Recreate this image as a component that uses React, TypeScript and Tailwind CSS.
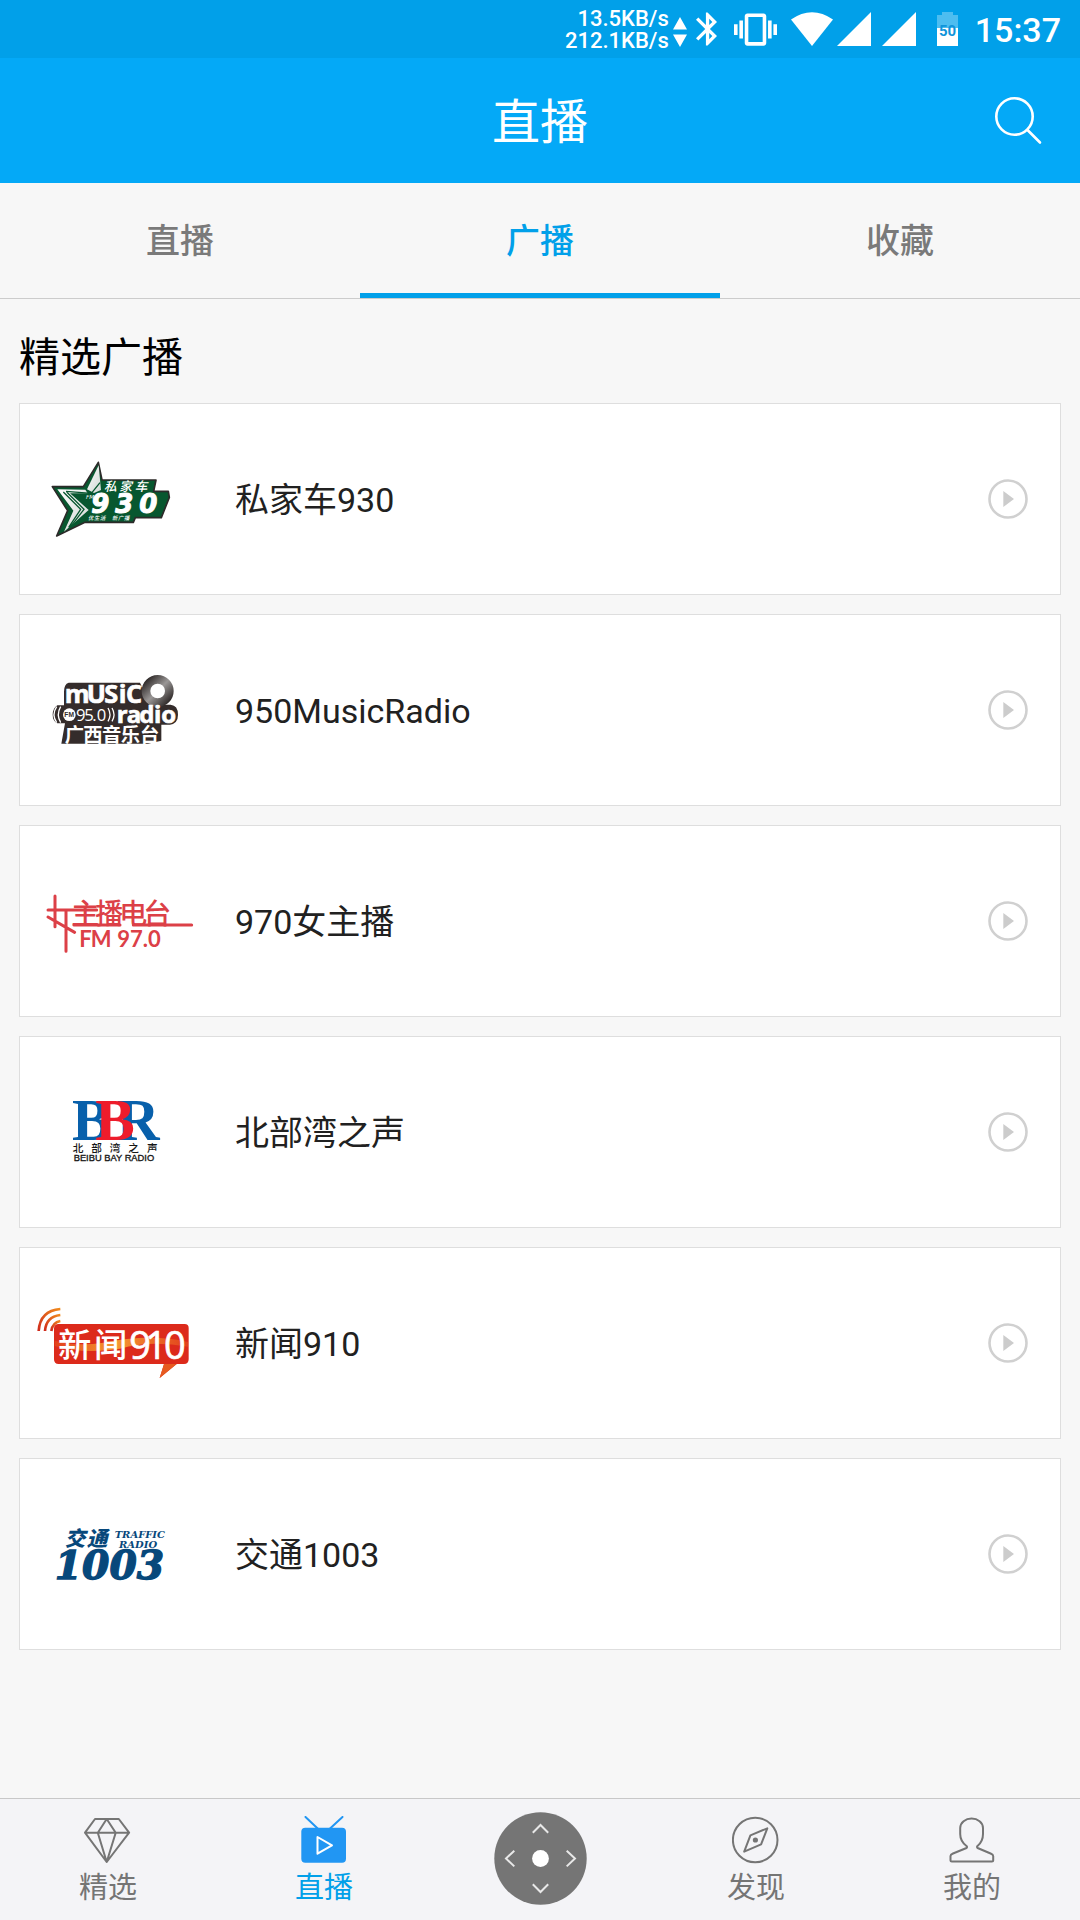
import React from "react";

const CJK = "font-['Roboto','Noto_Sans_CJK_SC',sans-serif]";
const LOGO = "h-[110px] w-[170px] shrink-0";

function Logo930() {
  return (
    <svg className={LOGO} viewBox="30 42 510 330" role="img" aria-label="FM930">
      <defs>
        <linearGradient id="star" x1="0" y1="0" x2="1" y2="1">
          <stop offset="0" stopColor="#ffffff" />
          <stop offset="1" stopColor="#cfd6d2" />
        </linearGradient>
      </defs>
      <path d="M235 97 L246 150 L408 150 L401 184 L445 184 L448 202 L424 263 L346 263 L340 277 L195 277 L110 318 L143 242 L97 170 L190 170 Z" fill="#07572f" stroke="#2c2a29" strokeWidth="5" strokeLinejoin="round" />
      <path d="M236 106 L243 180 L222 189 L201 178 Z" fill="url(#star)" />
      <path d="M112 178 L196 179 L203 190 L150 190 L206 240 L132 305 L160 242 Z" fill="url(#star)" />
      <path d="M130 186 L182 238 L146 292 M140 186 L192 238 L150 292 M240 158 L214 190 L138 184" fill="none" stroke="#07572f" strokeWidth="4" />
      <g fill="#ffffff" fontStyle="italic" fontWeight="700">
        <text className={CJK} x="252 298 344" y="182" fontSize="38" fontWeight="500">私家车</text>
        <text className="font-['DejaVu_Sans']" x="198" y="206" fontSize="17" fontWeight="400">FM</text>
        <text className="font-['DejaVu_Sans']" x="214 286 358" y="249" fontSize="78" stroke="#ffffff" strokeWidth="3">930</text>
        <text className={CJK} x="204 222 240 276 294 312" y="271" fontSize="16" fontWeight="500">优生活新广播</text>
      </g>
    </svg>
  );
}

function Logo950() {
  return (
    <svg className={LOGO} viewBox="30 15 510 330" role="img" aria-label="Music Radio FM95.0">
      <defs>
        <linearGradient id="disc" x1="0" y1="0" x2="1" y2="1">
          <stop offset="0" stopColor="#2b2625" />
          <stop offset="0.5" stopColor="#9a9796" />
          <stop offset="1" stopColor="#2b2625" />
        </linearGradient>
      </defs>
      <path d="M146 98 Q132 102 132 125 V166 H112 Q98 176 98 194 Q98 212 112 220 H135 L124 281 H384 L424 272 V224 H450 Q474 220 474 194 Q474 166 452 164 H390 L360 98 Z" fill="#342c2b" />
      <circle cx="413" cy="123" r="35" fill="#ffffff" stroke="url(#disc)" strokeWidth="26" />
      <g fill="#ffffff" stroke="#ffffff" strokeWidth="2" fontWeight="700">
        <text className="font-['Open_Sans']" x="134" y="158" fontSize="76">m</text>
        <text className="font-['Open_Sans']" x="200 253 296 318" y="158" fontSize="76">USiC</text>
        <text className="font-['Open_Sans']" x="290 320 358 402 424" y="220" fontSize="72">radio</text>
        <text className={CJK} x="134 190 246 302 360" y="275" fontSize="58" stroke="none">广西音乐台</text>
      </g>
      <circle cx="148" cy="194" r="19" fill="#ffffff" />
      <text className="font-['Liberation_Sans']" x="133" y="202" fontSize="20" fontWeight="700" fill="#342c2b">FM</text>
      <text className="font-['Open_Sans']" x="168 193 217 230" y="213" fontSize="50" fill="#ffffff">95.0</text>
      <path d="M122 170 Q108 194 122 218 M110 170 Q94 194 110 218 M264 174 Q276 194 264 214 M276 174 Q288 194 276 214" fill="none" stroke="#ffffff" strokeWidth="4" />
    </svg>
  );
}

function Logo970() {
  return (
    <svg className={LOGO} viewBox="30 -12 510 330" role="img" aria-label="女主播电台 FM 97.0">
      <g fill="none" stroke="#dc4047" strokeWidth="9" strokeLinecap="round">
        <path d="M105 78 V170 M84 120 H230 M84 141 L164 187 M138 122 V244 M162 165 H300 M340 165 H515" />
      </g>
      <g fill="#dc4047">
        <text className={CJK} x="154 226 298 370" y="161" fontSize="84" fontWeight="500">主播电台</text>
        <text className="font-['Lato']" x="178 212 282 292 330 368 384" y="230" fontSize="66" fontWeight="700">FM 97.0</text>
      </g>
    </svg>
  );
}

function LogoBBR() {
  return (
    <svg className={LOGO} viewBox="30 -9 510 330" role="img" aria-label="北部湾之声 Beibu Bay Radio">
      <g className="font-['Liberation_Serif']" fontWeight="700" fontSize="178">
        <text x="156" y="179" fill="#0860ab">B</text>
        <text x="290" y="179" fill="#0860ab">R</text>
        <text x="226" y="179" fill="#ee1c2b">B</text>
      </g>
      <g fill="#161616">
        <text className={CJK} x="158 214 269 325 381" y="216" fontSize="32" fontWeight="500">北部湾之声</text>
        <text className="font-['Liberation_Sans']" x="161" y="243" fontSize="28" stroke="#161616" strokeWidth="1">BEIBU BAY RADIO</text>
      </g>
    </svg>
  );
}

function Logo910() {
  return (
    <svg className={LOGO} viewBox="30 -6 510 330" role="img" aria-label="新闻910">
      <defs>
        <linearGradient id="wave" x1="0" y1="0" x2="1" y2="0">
          <stop offset="0" stopColor="#e2401c" />
          <stop offset="0.45" stopColor="#f59a32" />
          <stop offset="1" stopColor="#e2401c" />
        </linearGradient>
        <linearGradient id="arc" x1="0" y1="1" x2="1" y2="0">
          <stop offset="0" stopColor="#cf2a1c" />
          <stop offset="1" stopColor="#f08a1c" />
        </linearGradient>
      </defs>
      <g fill="none" stroke="url(#arc)" strokeWidth="8">
        <path d="M56 123 Q60 62 121 57" />
        <path d="M75 123 Q78 80 121 75" />
        <path d="M94 123 Q98 97 121 93" />
      </g>
      <path d="M116 102 H494 Q506 102 506 114 V208 Q506 222 492 222 H470 L419 264 L432 222 H116 Q102 222 102 208 V116 Q102 102 116 102 Z" fill="#dc2a1b" />
      <path d="M104 152 Q170 170 250 158 Q390 130 504 156 V170 Q390 150 300 176 Q190 194 104 168 Z" fill="url(#wave)" />
      <path d="M470 222 L419 264 L432 222 Z" fill="#e65a20" />
      <g fill="#ffffff">
        <text className={CJK} x="114 222" y="200" fontSize="100" fontWeight="500">新闻</text>
        <text className="font-['Open_Sans']" x="328 376 432" y="206" fontSize="114" stroke="#ffffff" strokeWidth="2">910</text>
      </g>
    </svg>
  );
}

function Logo1003() {
  return (
    <svg className={LOGO} viewBox="30 -3 510 330" role="img" aria-label="交通 1003 Traffic Radio">
      <g fill="#07487b" fontWeight="700" fontStyle="italic">
        <text className={CJK} x="134 200" y="138" fontSize="62" fontWeight="900">交通</text>
        <text className="font-['DejaVu_Serif']" x="284" y="114" fontSize="30">TRAFFIC</text>
        <text className="font-['DejaVu_Serif']" x="297" y="143" fontSize="30">RADIO</text>
        <text className="font-['DejaVu_Serif']" x="104" y="237" fontSize="118" stroke="#07487b" strokeWidth="4">1003</text>
      </g>
    </svg>
  );
}

const stations = [
  { name: "私家车930", Logo: Logo930 },
  { name: "950MusicRadio", Logo: Logo950 },
  { name: "970女主播", Logo: Logo970 },
  { name: "北部湾之声", Logo: LogoBBR },
  { name: "新闻910", Logo: Logo910 },
  { name: "交通1003", Logo: Logo1003 },
];

const tabs = ["直播", "广播", "收藏"];

function StatusBar() {
  return (
    <div className="flex h-[58px] items-center justify-end bg-[#01a0e9] pr-[19px] text-white">
      <div className="flex flex-col pt-[2px] text-right text-[22px] leading-[22px] font-medium">
        <span>13.5KB/s</span>
        <span>212.1KB/s</span>
      </div>
      <svg className="mt-[6px] ml-1 h-[30px] w-[14px]" viewBox="0 0 14 30" fill="currentColor" aria-hidden="true">
        <path d="M7 0 L14 12.5 H0 Z M0 17.5 H14 L7 30 Z" />
      </svg>
      <svg className="ml-[9px] h-[34px] w-[21px]" viewBox="5 2 12.71 20" fill="currentColor" aria-hidden="true">
        <path d="M17.71 7.71L12 2h-1v7.59L6.41 5 5 6.41 10.59 12 5 17.59 6.41 19 11 14.41V22h1l5.71-5.71-4.3-4.29 4.3-4.29zM13 5.83l1.88 1.88L13 9.59V5.83zm1.88 10.46L13 18.17v-3.76l1.88 1.88z" />
      </svg>
      <svg className="ml-[17px] h-[33px] w-[43px]" viewBox="0 3 24 18" fill="currentColor" aria-hidden="true">
        <path d="M0 15h2V9H0v6zm3 2h2V7H3v10zm19-8v6h2V9h-2zm-3 8h2V7h-2v10zM16.5 3h-9C6.67 3 6 3.67 6 4.5v15c0 .83.67 1.5 1.5 1.5h9c.83 0 1.5-.67 1.5-1.5v-15c0-.83-.67-1.5-1.5-1.5zM16 19H8V5h8v14z" />
      </svg>
      <svg className="ml-[14px] h-[34px] w-[42px]" viewBox="0 0 42 34" fill="currentColor" aria-hidden="true">
        <path d="M0 7.5 Q21 -7 42 7.5 L21 34 Z" />
      </svg>
      <svg className="ml-1 h-[34px] w-[34px]" viewBox="0 0 34 34" fill="currentColor" aria-hidden="true">
        <path d="M34 0 V34 H0 Z" />
      </svg>
      <svg className="ml-[11px] h-[34px] w-[34px]" viewBox="0 0 34 34" fill="currentColor" aria-hidden="true">
        <path d="M34 0 V34 H0 Z" />
      </svg>
      <svg className="ml-[21px] h-[34px] w-[21px]" viewBox="0 0 21 34" role="img" aria-label="50">
        <path d="M5 0 H16 V3 H21 V16 H0 V3 H5 Z" fill="#4dbdf0" />
        <path d="M0 16 H21 V34 H0 Z" fill="#ffffff" />
        <text x="2" y="24" fontSize="15" fontWeight="700" fill="#0f94da">50</text>
      </svg>
      <span className="ml-[17px] pt-[2px] text-[34px] leading-10 font-medium">15:37</span>
    </div>
  );
}

function NavItem({ label, active, children }: { label: string; active?: boolean; children: React.ReactNode }) {
  return (
    <button
      type="button"
      aria-current={active ? "page" : undefined}
      className={`flex flex-1 flex-col items-center gap-1 pt-[17px] text-[29px] leading-10 ${active ? "text-[#01a0e9]" : "text-[#757575]"}`}
    >
      <svg className="h-12 w-12" viewBox="0 0 48 48" fill="none" stroke="currentColor" strokeWidth="2" strokeLinejoin="round" aria-hidden="true">
        {children}
      </svg>
      {label}
    </button>
  );
}

export default function App() {
  return (
    <div className={`flex min-h-screen flex-col bg-[#f7f7f7] ${CJK}`}>
      <StatusBar />
      <header className="grid h-[125px] grid-cols-[1fr_auto_1fr] items-center bg-[#04a9f7] text-white">
        <h1 className="col-start-2 pt-1 text-[48px] leading-[60px]">直播</h1>
        <button type="button" aria-label="搜索" className="mr-[38px] justify-self-end">
          <svg className="h-12 w-12" viewBox="0 0 48 48" fill="none" stroke="currentColor" strokeWidth="2.6" strokeLinecap="round">
            <circle cx="20.5" cy="19.5" r="18.2" />
            <path d="M33.5 33 L46 45.5" />
          </svg>
        </button>
      </header>

      <div role="tablist" className="grid grid-cols-3 border-b border-[#cccccc]">
        {tabs.map((t, i) => (
          <button
            key={t}
            type="button"
            role="tab"
            aria-selected={i === 1}
            className={`h-[115px] border-y-5 border-t-transparent text-[34px] leading-10 font-medium ${i === 1 ? "border-b-[#01a0e9] text-[#01a0e9]" : "border-b-transparent text-[#7a7a7a]"}`}
          >
            {t}
          </button>
        ))}
      </div>

      <main className="flex-1 px-[19px] pb-[19px]">
        <h2 className="pt-[29px] pb-[15px] text-[41px] leading-[60px] text-black">精选广播</h2>
        <ul className="flex flex-col gap-[19px]">
          {stations.map(({ name, Logo }) => (
            <li key={name} className="flex h-48 items-center border border-[#dedede] bg-white pr-8 pl-[10px]">
              <Logo />
              <span className="ml-[35px] flex-1 pt-[2px] text-[34px] leading-10 text-[#212121]">{name}</span>
              <button type="button" aria-label={`播放 ${name}`}>
                <svg className="h-10 w-10" viewBox="0 0 40 40">
                  <circle cx="20" cy="20" r="18.5" fill="none" stroke="#d0d0d0" strokeWidth="2.6" />
                  <path d="M15.3 12 L26 20 L15.3 28 Z" fill="#cccccc" />
                </svg>
              </button>
            </li>
          ))}
        </ul>
      </main>

      <nav className="flex h-[122px] border-t border-[#c8c8c8] bg-[#f4f4f7]">
        <NavItem label="精选">
          <path d="M11 3 H34.8 L45.1 16.7 L22.7 46 L1 16.7 Z M1 16.7 H45 M22.7 3 L13.8 16.7 L22.7 46 L31.7 16.7 Z" />
        </NavItem>
        <NavItem label="直播" active>
          <path d="M5.5 1 L18.2 13 M42.5 1 L29.5 13" stroke="#2196f3" strokeLinecap="round" />
          <rect x="1.3" y="11.7" width="44.7" height="35" rx="4" fill="#2196f3" stroke="none" />
          <path d="M17.5 21 L32 29.3 L17.5 37.7 Z" stroke="#ffffff" />
        </NavItem>
        <button type="button" aria-label="遥控器" className="flex flex-1 items-start justify-center pt-[13px]">
          <svg className="h-[93px] w-[93px]" viewBox="0 0 93 93" fill="none" stroke="#e8e8e8" strokeWidth="2">
            <circle cx="46.5" cy="46.5" r="46.2" fill="#757575" stroke="none" />
            <path d="M20.3 38.7 L12 46.5 L20.3 54.4 M72.7 38.7 L81 46.5 L72.7 54.4 M38.8 20.7 L46.5 13 L54.2 20.7 M38.8 72.3 L46.5 80 L54.2 72.3" />
            <circle cx="46.5" cy="46.5" r="8.4" fill="#ffffff" stroke="none" />
          </svg>
        </button>
        <NavItem label="发现">
          <circle cx="23.2" cy="24" r="22.3" />
          <path d="M35.3 12.3 L29.1 28.3 L12.2 35.7 L18.4 19.3 Z" />
          <circle cx="23.4" cy="24" r="2.6" fill="currentColor" stroke="none" />
        </NavItem>
        <NavItem label="我的">
          <path d="M23.6 2.5 C17.5 2.5 12.2 6.5 12.2 12 V18 C12.2 23 14.5 27 18.5 30 Q19.6 31 18.5 32 L5 37.5 Q2.5 38.7 2.5 40 V44.5 Q2.5 45.5 3.8 45.5 H44 Q45.2 45.5 45.2 44.5 V40 Q45.2 38.7 42.6 37.5 L29.6 32 Q28.5 31 29.5 30 C33.2 27 35 23 35 18 V12 C35 6.5 29.7 2.5 23.6 2.5 Z" />
        </NavItem>
      </nav>
    </div>
  );
}
